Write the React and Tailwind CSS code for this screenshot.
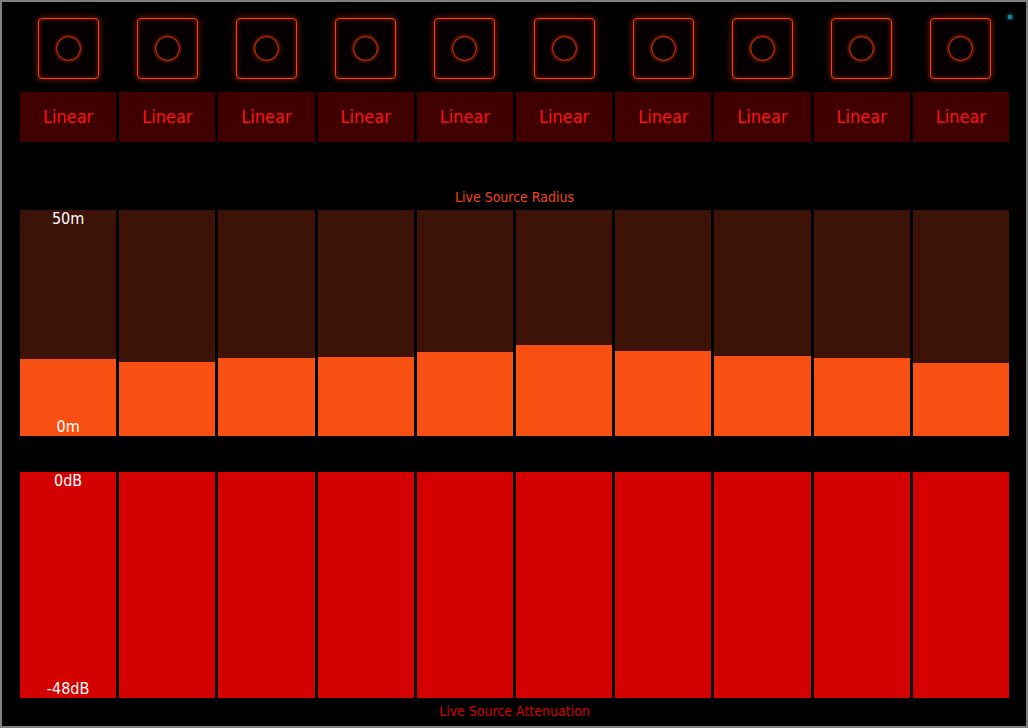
import React from "react";

const fills = [77, 74, 78, 79, 84, 91, 85, 80, 78, 73];
const cols = Array.from({ length: 10 }, (_, i) => i);

export default function App() {
  return (
    <div
      className="w-[1028px] h-[728px] bg-black border-2 border-[#808080] box-border relative overflow-hidden"
      style={{ fontFamily: '"DejaVu Sans Condensed", "DejaVu Sans", sans-serif' }}
    >
      <div className="absolute left-[1006px] top-[13px] w-[4px] h-[4px] bg-[#1f7f96] shadow-[0_0_3px_1px_rgba(31,127,150,0.6)]" />
      <div className="pl-[18px] pr-[17px] pt-[16px] flex flex-col">
        {/* knobs */}
        <div className="grid grid-cols-10 gap-[3px] h-[61px]">
          {cols.map((i) => (
            <div key={i} className="flex justify-center">
              <div className="w-[61px] h-[61px] rounded-[4px] border-[1.5px] border-[#ff4000] shadow-[0_0_5px_2px_rgba(255,60,0,0.3),inset_0_0_4px_1px_rgba(255,60,0,0.35)] bg-[#040000] flex items-center justify-center">
                <div className="w-[13px] h-0 hidden" />
                <div className="w-[25px] h-[25px] rounded-full border-[1.5px] border-[#e03800] shadow-[0_0_3px_1px_rgba(255,60,0,0.45),inset_0_0_2px_rgba(255,60,0,0.5)] mt-[-1px]" />
              </div>
            </div>
          ))}
        </div>
        {/* Linear buttons */}
        <div className="grid grid-cols-10 gap-[3px] h-[50px] mt-[13px]">
          {cols.map((i) => (
            <div
              key={i}
              className="bg-[#400000] flex items-center justify-center text-[18px] text-[#ff1212] leading-none"
            >
              Linear
            </div>
          ))}
        </div>
        {/* radius label */}
        <div className="h-[68px] flex items-end justify-center pb-[5px]">
          <span className="text-[14px] leading-[16px] text-[#f24612]">Live Source Radius</span>
        </div>
        {/* radius bars */}
        <div className="grid grid-cols-10 gap-[3px] h-[226px]">
          {cols.map((i) => (
            <div key={i} className="relative bg-[#3d1307] flex flex-col justify-end">
              <div className="bg-[#f84f12]" style={{ height: fills[i] }} />
              {i === 0 && (
                <>
                  <span className="absolute top-[1px] left-0 right-0 text-center text-white text-[16px] leading-none">50m</span>
                  <span className="absolute bottom-[1px] left-0 right-0 text-center text-white text-[16px] leading-none">0m</span>
                </>
              )}
            </div>
          ))}
        </div>
        {/* attenuation bars */}
        <div className="grid grid-cols-10 gap-[3px] h-[226px] mt-[36px]">
          {cols.map((i) => (
            <div key={i} className="relative bg-[#d40000]">
              {i === 0 && (
                <>
                  <span className="absolute top-[1px] left-0 right-0 text-center text-white text-[16px] leading-none">0dB</span>
                  <span className="absolute bottom-[1px] left-0 right-0 text-center text-white text-[16px] leading-none">-48dB</span>
                </>
              )}
            </div>
          ))}
        </div>
        <div className="mt-[5px] flex justify-center">
          <span className="text-[14px] leading-[16px] text-[#d40000]">Live Source Attenuation</span>
        </div>
      </div>
    </div>
  );
}
